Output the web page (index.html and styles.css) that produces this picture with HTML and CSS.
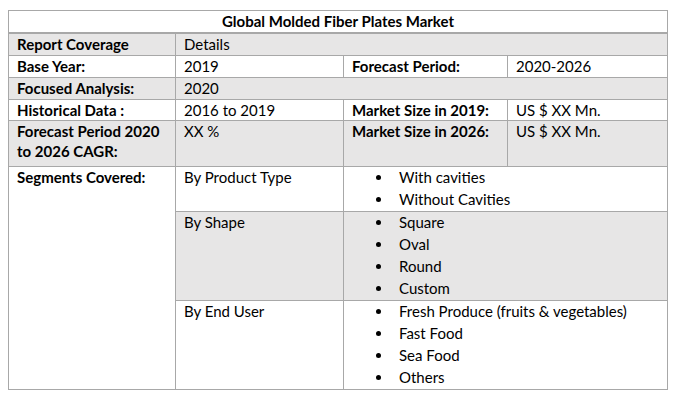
FILE: index.html
```html
<!DOCTYPE html>
<html lang="en">
<head>
<meta charset="utf-8">
<title>Global Molded Fiber Plates Market</title>
<link rel="stylesheet" href="styles.css">
</head>
<body>
<div class="report">
  <div class="cell title span4">Global Molded Fiber Plates Market</div>

  <div class="cell gray label">Report Coverage</div>
  <div class="cell gray span3">Details</div>

  <div class="cell label">Base Year:</div>
  <div class="cell">2019</div>
  <div class="cell label">Forecast Period:</div>
  <div class="cell">2020-2026</div>

  <div class="cell gray label">Focused Analysis:</div>
  <div class="cell gray span3">2020</div>

  <div class="cell label short">Historical Data :</div>
  <div class="cell short">2016 to 2019</div>
  <div class="cell label short">Market Size in 2019:</div>
  <div class="cell short">US $ XX Mn.</div>

  <div class="cell gray label tall">Forecast Period 2020<br>to 2026 CAGR:</div>
  <div class="cell gray tall">XX %</div>
  <div class="cell gray label tall">Market Size in 2026:</div>
  <div class="cell gray tall">US $ XX Mn.</div>

  <div class="cell label rows3">Segments Covered:</div>
  <div class="cell">By Product Type</div>
  <div class="cell span2">
    <ul class="bullets">
      <li>With cavities</li>
      <li>Without Cavities</li>
    </ul>
  </div>

  <div class="cell gray">By Shape</div>
  <div class="cell gray span2">
    <ul class="bullets">
      <li>Square</li>
      <li>Oval</li>
      <li>Round</li>
      <li>Custom</li>
    </ul>
  </div>

  <div class="cell">By End User</div>
  <div class="cell span2">
    <ul class="bullets">
      <li>Fresh Produce (fruits &amp; vegetables)</li>
      <li>Fast Food</li>
      <li>Sea Food</li>
      <li>Others</li>
    </ul>
  </div>
</div>
</body>
</html>
```

FILE: styles.css
```css
html, body {
  background: #ffffff;
}

body {
  margin: 10px 8px;
  font-family: Lato, "Liberation Sans", sans-serif;
  font-size: 15px;
  color: #000000;
}

.report {
  display: grid;
  grid-template-columns: 166px 167px 163px 159px;
  gap: 1px;
  padding: 1px;
  width: max-content;
  background: #a8a8a8;
}

.cell {
  background: #ffffff;
  padding: 0 8px;
  line-height: 21px;
  min-height: 20px;
}

.gray {
  background: #e7e6e6;
}

.label {
  font-weight: 700;
}

.title {
  font-weight: 700;
  text-align: center;
  margin-bottom: 1px;
}

.span4 { grid-column: span 4; }
.span3 { grid-column: span 3; }
.span2 { grid-column: span 2; }
.rows3 { grid-row: span 3; }

.short {
  line-height: 20px;
}

.tall {
  line-height: 20px;
  height: 45px;
}

.bullets {
  list-style: none;
  margin: -1px 0 1px;
  padding: 0;
}

.bullets li {
  display: flex;
  align-items: center;
  line-height: 22px;
}

.bullets li::before {
  content: "";
  width: 5px;
  height: 5px;
  border-radius: 50%;
  background: #000000;
  margin-left: 24px;
  margin-right: 18px;
  flex: none;
}
```
